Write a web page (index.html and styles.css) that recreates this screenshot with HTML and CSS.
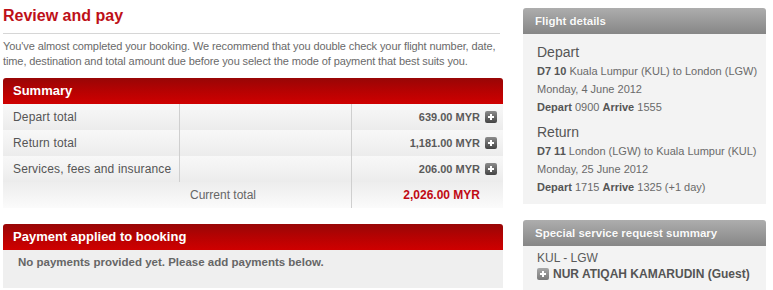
FILE: index.html
```html
<!DOCTYPE html>
<html lang="en">
<head>
<meta charset="utf-8">
<title>Review and pay</title>
<link rel="stylesheet" href="styles.css">
</head>
<body>
<div class="page">
  <main class="main">
    <h1 class="title">Review and pay</h1>
    <p class="intro">You've almost completed your booking. We recommend that you double check your flight number, date, time, destination and total amount due before you select the mode of payment that best suits you.</p>

    <section class="panel">
      <h2 class="panel-head red">Summary</h2>
      <div class="summary">
        <div class="row">
          <div class="cell label">Depart total</div>
          <div class="cell mid"></div>
          <div class="cell amount">639.00 MYR <span class="plus dark"></span></div>
        </div>
        <div class="row">
          <div class="cell label">Return total</div>
          <div class="cell mid"></div>
          <div class="cell amount">1,181.00 MYR <span class="plus dark"></span></div>
        </div>
        <div class="row">
          <div class="cell label">Services, fees and insurance</div>
          <div class="cell mid"></div>
          <div class="cell amount">206.00 MYR <span class="plus dark"></span></div>
        </div>
        <div class="row total">
          <div class="cell total-label">Current total</div>
          <div class="cell amount total-amount">2,026.00 MYR</div>
        </div>
      </div>
    </section>

    <section class="panel payment">
      <h2 class="panel-head red">Payment applied to booking</h2>
      <div class="payment-body">No payments provided yet. Please add payments below.</div>
    </section>
  </main>

  <aside class="side">
    <section class="box">
      <h2 class="box-head">Flight details</h2>
      <div class="box-body flight">
        <h3 class="leg">Depart</h3>
        <p class="line"><b>D7 10</b> Kuala Lumpur (KUL) to London (LGW)</p>
        <p class="line">Monday, 4 June 2012</p>
        <p class="line"><b>Depart</b> 0900 <b>Arrive</b> 1555</p>
        <h3 class="leg leg-return">Return</h3>
        <p class="line"><b>D7 11</b> London (LGW) to Kuala Lumpur (KUL)</p>
        <p class="line">Monday, 25 June 2012</p>
        <p class="line"><b>Depart</b> 1715 <b>Arrive</b> 1325 (+1 day)</p>
      </div>
    </section>

    <section class="box ssr">
      <h2 class="box-head">Special service request summary</h2>
      <div class="box-body ssr-body">
        <p class="ssr-line">KUL - LGW</p>
        <p class="ssr-line"><span class="plus light"></span><b>NUR ATIQAH KAMARUDIN (Guest)</b></p>
      </div>
    </section>
  </aside>
</div>
</body>
</html>
```

FILE: styles.css
```css
html, body {
  margin: 0;
  padding: 0;
  background: #fff;
}

body {
  font-family: "Liberation Sans", Arial, sans-serif;
  color: #666;
  font-size: 12px;
}

.page {
  display: flex;
  align-items: flex-start;
  gap: 20px;
  padding-left: 3px;
}

.main {
  width: 500px;
  flex: none;
}

.title {
  margin: 6px 0 0;
  font-size: 16px;
  line-height: 20px;
  font-weight: bold;
  color: #be1018;
  padding-bottom: 7px;
  border-bottom: 1px solid #d6d6d6;
  width: 497px;
}

.intro {
  margin: 5px 0 0;
  font-size: 11px;
  line-height: 15px;
  letter-spacing: -0.1px;
  color: #6a6a6a;
}

.panel {
  margin-top: 9px;
}

.panel-head {
  margin: 0;
  height: 26px;
  line-height: 26px;
  font-size: 13px;
  font-weight: bold;
  color: #fff;
  padding-left: 10px;
  border-radius: 3px 3px 0 0;
}

.panel-head.red {
  background: linear-gradient(to bottom, #980606 0%, #b60202 50%, #cf0000 100%);
}

.summary {
  display: flex;
  flex-direction: column;
}

.row {
  display: grid;
  grid-template-columns: 177px 172px 151px;
  height: 26px;
  background: linear-gradient(to bottom, #f8f8f8, #ececec);
}

.row.total {
  grid-template-columns: 349px 151px;
  background: linear-gradient(to bottom, #ededed, #fbfbfb);
}

.cell {
  line-height: 26px;
  font-size: 12px;
  color: #555;
  white-space: nowrap;
}

.label {
  padding-left: 10px;
  border-right: 1px solid #cfcfcf;
  letter-spacing: 0.15px;
}

.mid {
  border-right: 1px solid #cfcfcf;
}

.amount {
  display: flex;
  justify-content: flex-end;
  align-items: center;
  gap: 5px;
  padding-right: 6px;
  font-size: 11px;
  font-weight: bold;
  color: #5a5a5a;
}

.total-label {
  padding-left: 187px;
  border-right: 1px solid #cfcfcf;
  color: #666;
}

.total-amount {
  padding-right: 23px;
  font-size: 12px;
  color: #c00a14;
}

.plus {
  position: relative;
  display: inline-block;
  width: 12px;
  height: 12px;
  border-radius: 2px;
  flex: none;
}

.plus.dark {
  background: linear-gradient(to bottom, #8c8c8c, #444);
}

.plus.light {
  background: linear-gradient(to bottom, #a8a8a8, #7a7a7a);
  vertical-align: -2px;
  margin-right: 4px;
}

.plus::before,
.plus::after {
  content: "";
  position: absolute;
  background: #fff;
}

.plus::before {
  left: 3px;
  top: 5px;
  width: 6px;
  height: 2px;
}

.plus::after {
  left: 5px;
  top: 3px;
  width: 2px;
  height: 6px;
}

.payment {
  margin-top: 16px;
}

.payment-body {
  background: #efefef;
  min-height: 28px;
  padding: 5px 15px;
  font-size: 11.5px;
  line-height: 14px;
  font-weight: bold;
  color: #666;
}

.side {
  width: 243px;
  flex: none;
  padding-top: 8px;
}

.box-head {
  margin: 0;
  height: 26px;
  line-height: 26px;
  font-size: 11.5px;
  font-weight: bold;
  color: #fafafa;
  padding-left: 12px;
  border-radius: 3px 3px 0 0;
  background: linear-gradient(to bottom, #adadad, #868686);
  text-shadow: 0 0 1px rgba(0, 0, 0, 0.15);
}

.box-body {
  background: #f3f3f3;
  padding-left: 14px;
}

.flight {
  padding-top: 8px;
  padding-bottom: 8px;
}

.leg {
  margin: 0;
  font-size: 14px;
  line-height: 20px;
  font-weight: normal;
  color: #555;
}

.leg-return {
  margin-top: 6px;
}

.line {
  margin: 0;
  font-size: 11px;
  line-height: 18px;
  color: #6a6a6a;
  white-space: nowrap;
}

.line b {
  color: #555;
}

.ssr {
  margin-top: 16px;
}

.ssr-body {
  padding-top: 4px;
  padding-bottom: 12px;
}

.ssr-line {
  margin: 0;
  font-size: 12px;
  line-height: 16px;
  color: #5a5a5a;
  white-space: nowrap;
}

.ssr-line b {
  color: #555;
}
```
